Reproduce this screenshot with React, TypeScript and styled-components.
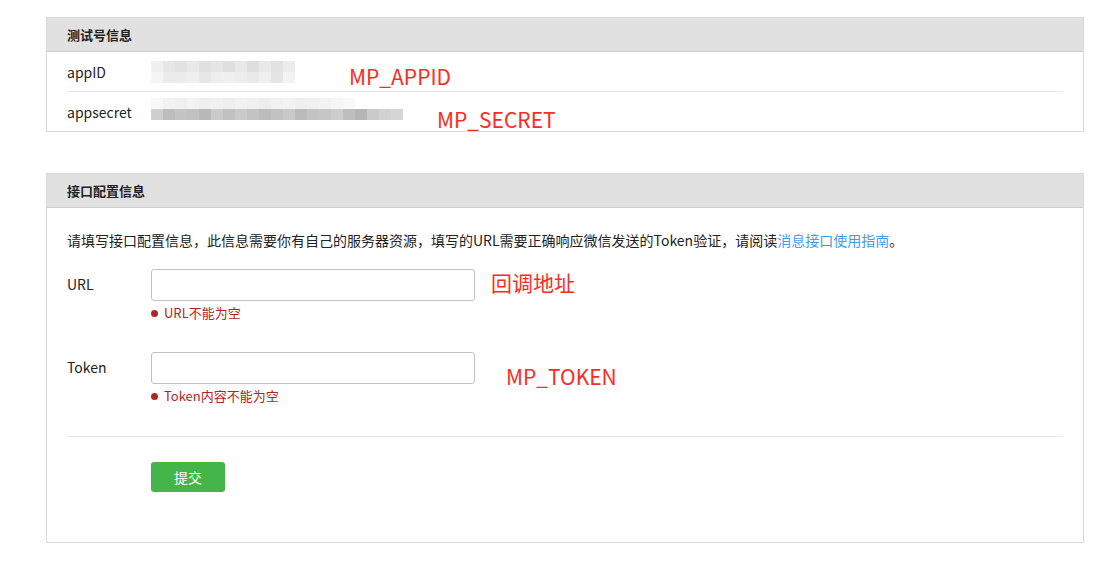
import React from 'react';
import styled, { createGlobalStyle } from 'styled-components';

const GlobalStyle = createGlobalStyle`
  html, body {
    margin: 0;
    background: #ffffff;
  }
  body {
    font-family: "Noto Sans CJK SC", "Noto Sans", sans-serif;
    font-size: 14px;
    color: #222222;
  }
`;

const StyledPage = styled.div`
  padding: 17px 27px 20px 46px;
  display: flex;
  flex-direction: column;
  gap: 41px;
`;

const StyledPanel = styled.section`
  width: 1036px;
  border: 1px solid #d9d9d9;
  background: #ffffff;
`;

const StyledPanelHeader = styled.h3`
  margin: 0;
  height: 33px;
  padding: 0 20px;
  display: flex;
  align-items: center;
  background: #e1e1e1;
  border-bottom: 1px solid #cdcdcd;
  font-size: 13px;
  font-weight: 700;
  color: #222222;
`;

const StyledInfoBody = styled.div`
  padding: 0 20px;
`;

const StyledInfoRow = styled.div`
  height: 39px;
  display: flex;
  align-items: center;
  &:not(:last-child) {
    border-bottom: 1px solid #e7e7e7;
  }
`;

const StyledInfoLabel = styled.span`
  width: 84px;
  flex-shrink: 0;
  font-size: 14px;
`;

const StyledMosaic = styled.div<{ $shift: number }>`
  display: flex;
  flex-direction: column;
  transform: translateY(${(p) => p.$shift}px);
`;

const StyledMosaicRow = styled.div`
  display: flex;
  height: 11px;
`;

const StyledMosaicCell = styled.span<{ $color: string }>`
  width: 12px;
  height: 100%;
  background: ${(p) => p.$color};
`;

const StyledNote = styled.span<{ $left: number; $shift: number }>`
  margin-left: ${(p) => p.$left}px;
  transform: translateY(${(p) => p.$shift}px);
  font-size: 21px;
  color: #ff2a23;
  white-space: nowrap;
`;

const StyledFormBody = styled.div`
  padding: 22px 20px 50px;
`;

const StyledIntro = styled.p`
  margin: 0 0 19px;
  font-size: 14px;
  line-height: 20px;
  color: #222222;
`;

const StyledLink = styled.a`
  color: #459ae9;
  text-decoration: none;
`;

const StyledField = styled.div`
  display: flex;
  align-items: flex-start;
  margin-bottom: 30px;
`;

const StyledFieldLabel = styled.label`
  width: 84px;
  flex-shrink: 0;
  line-height: 30px;
  font-size: 14px;
`;

const StyledFieldControl = styled.div`
  display: flex;
  flex-direction: column;
`;

const StyledInputRow = styled.div`
  display: flex;
  align-items: center;
`;

const StyledInput = styled.input`
  box-sizing: border-box;
  width: 324px;
  height: 32px;
  border: 1px solid #c2c2c2;
  border-radius: 3px;
  padding: 0 8px;
  font: inherit;
  outline: none;
`;

const StyledError = styled.div`
  margin-top: 3px;
  font-size: 13px;
  line-height: 18px;
  color: #b32424;
  display: flex;
  align-items: center;
  gap: 6px;
  &::before {
    content: '';
    width: 7px;
    height: 7px;
    border-radius: 50%;
    background: #b32424;
  }
`;

const StyledDivider = styled.hr`
  margin: 31px 0 25px;
  border: none;
  border-top: 1px solid #e7e7e7;
`;

const StyledActions = styled.div`
  padding-left: 84px;
`;

const StyledButton = styled.button`
  width: 74px;
  height: 30px;
  border: none;
  border-radius: 3px;
  background: #44b549;
  color: #ffffff;
  font: inherit;
  font-size: 14px;
  cursor: pointer;
`;

const APPID_MOSAIC = [
  ['#f0f0f0', '#e6e6e6', '#e2e2e2', '#e8e8e8', '#e1e1e1', '#e5e5e5', '#dfdfdf', '#e8e8e8', '#dedede', '#e9e9e9', '#e2e2e2', '#ececec'],
  ['#f5f5f5', '#ebebeb', '#ececec', '#efefef', '#e7e7e7', '#eeeeee', '#f0f0f0', '#ededed', '#e9e9e9', '#efefef', '#e5e5e5', '#f3f3f3'],
];

const SECRET_MOSAIC = [
  ['#f8f8f8', '#f2f2f2', '#f0f0f0', '#f3f3f3', '#efefef', '#f1f1f1', '#eeeeee', '#f2f2f2', '#f0f0f0', '#ededed', '#f1f1f1', '#f3f3f3', '#efefef', '#f0f0f0', '#f2f2f2', '#f6f6f6', '#f8f8f8', '#ffffff', '#ffffff', '#ffffff', '#ffffff'],
  ['#cfcfcf', '#bdbdbd', '#c4c4c4', '#c1c1c1', '#b8b8b8', '#cbcbcb', '#c0c0c0', '#cacaca', '#c3c3c3', '#bcbcbc', '#c2c2c2', '#c8c8c8', '#bbbbbb', '#c3c3c3', '#c6c6c6', '#cdcdcd', '#bebebe', '#b5b5b5', '#cacaca', '#d2d2d2', '#d6d6d6'],
];

const Mosaic: React.FC<{ rows: string[][]; shift: number }> = ({ rows, shift }) => (
  <StyledMosaic $shift={shift}>
    {rows.map((row, i) => (
      <StyledMosaicRow key={i}>
        {row.map((color, j) => (
          <StyledMosaicCell key={j} $color={color} />
        ))}
      </StyledMosaicRow>
    ))}
  </StyledMosaic>
);

const App: React.FC = () => {
  return (
    <>
      <GlobalStyle />
      <StyledPage>
        <StyledPanel>
          <StyledPanelHeader>测试号信息</StyledPanelHeader>
          <StyledInfoBody>
            <StyledInfoRow>
              <StyledInfoLabel>appID</StyledInfoLabel>
              <Mosaic rows={APPID_MOSAIC} shift={0} />
              <StyledNote $left={54} $shift={4}>
                MP_APPID
              </StyledNote>
            </StyledInfoRow>
            <StyledInfoRow>
              <StyledInfoLabel>appsecret</StyledInfoLabel>
              <Mosaic rows={SECRET_MOSAIC} shift={-3} />
              <StyledNote $left={34} $shift={7}>
                MP_SECRET
              </StyledNote>
            </StyledInfoRow>
          </StyledInfoBody>
        </StyledPanel>

        <StyledPanel>
          <StyledPanelHeader>接口配置信息</StyledPanelHeader>
          <StyledFormBody>
            <StyledIntro>
              请填写接口配置信息，此信息需要你有自己的服务器资源，填写的URL需要正确响应微信发送的Token验证，请阅读
              <StyledLink href="#">消息接口使用指南</StyledLink>。
            </StyledIntro>
            <StyledField>
              <StyledFieldLabel>URL</StyledFieldLabel>
              <StyledFieldControl>
                <StyledInputRow>
                  <StyledInput type="text" />
                  <StyledNote $left={16} $shift={-3}>
                    回调地址
                  </StyledNote>
                </StyledInputRow>
                <StyledError>URL不能为空</StyledError>
              </StyledFieldControl>
            </StyledField>
            <StyledField>
              <StyledFieldLabel>Token</StyledFieldLabel>
              <StyledFieldControl>
                <StyledInputRow>
                  <StyledInput type="text" />
                  <StyledNote $left={31} $shift={8}>
                    MP_TOKEN
                  </StyledNote>
                </StyledInputRow>
                <StyledError>Token内容不能为空</StyledError>
              </StyledFieldControl>
            </StyledField>
            <StyledDivider />
            <StyledActions>
              <StyledButton type="button">提交</StyledButton>
            </StyledActions>
          </StyledFormBody>
        </StyledPanel>
      </StyledPage>
    </>
  );
};

export default App;
